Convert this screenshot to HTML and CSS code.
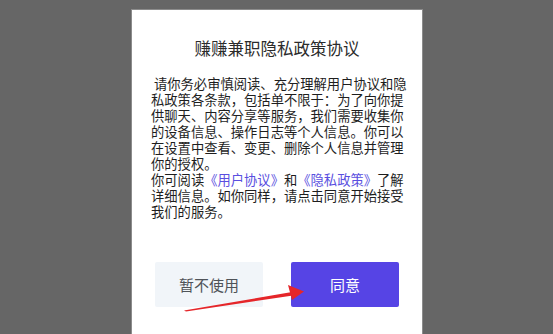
FILE: index.html
```html
<!DOCTYPE html>
<html lang="zh">
<head>
<meta charset="utf-8">
<link rel="stylesheet" href="styles.css">
</head>
<body>
<div class="page">
  <div class="dialog">
    <h1 class="title">赚赚兼职隐私政策协议</h1>
    <div class="content">
      <p>&nbsp;请你务必审慎阅读、充分理解用户协议和隐<br>私政策各条款，包括单不限于：为了向你提<br>供聊天、内容分享等服务，我们需要收集你<br>的设备信息、操作日志等个人信息。你可以<br>在设置中查看、变更、删除个人信息并管理<br>你的授权。</p>
      <p>你可阅读<a class="link">《用户协议》</a>和<a class="link">《隐私政策》</a>了解<br>详细信息。如你同样，请点击同意开始接受<br>我们的服务。</p>
    </div>
    <div class="actions">
      <button class="btn btn-cancel">暂不使用</button>
      <button class="btn btn-ok">同意</button>
    </div>
    <svg class="arrow" width="553" height="334" viewBox="0 0 553 334">
      <polygon points="184,310.5 292,292 293,295.5 186,311.5" fill="#e5262a"/>
      <polygon points="288,285 304,291.5 292,300" fill="#e5262a"/>
    </svg>
  </div>
</div>
</body>
</html>
```

FILE: styles.css
```css
html, body {
  margin: 0;
  padding: 0;
  width: 553px;
  height: 334px;
  overflow: hidden;
  background: #666666;
  font-family: "Noto Sans CJK SC", "Noto Sans", sans-serif;
}
.page {
  padding-top: 9px;
  padding-left: 131px;
}
.dialog {
  width: 290px;
  height: 330px;
  background: #ffffff;
  border: 1px solid #8c8c8c;
  border-bottom: none;
}
.title {
  margin: 0;
  padding-top: 27px;
  font-size: 16.5px;
  line-height: 22px;
  font-weight: 400;
  color: #2b2b2b;
  text-align: center;
}
.content {
  margin-top: 17px;
  padding: 0 19px;
  font-size: 13.3px;
  line-height: 16px;
  color: #1e1e1e;
  white-space: nowrap;
}
.content p {
  margin: 0;
}
.link {
  color: #5a4fe0;
}
.actions {
  display: flex;
  justify-content: space-between;
  padding: 0 23px;
  margin-top: 42px;
}
.btn {
  width: 108px;
  height: 45px;
  border: none;
  border-radius: 2px;
  font-family: "Noto Sans CJK SC", "Noto Sans", sans-serif;
  font-size: 15px;
  padding: 0;
}
.btn-cancel {
  background: #f1f5f9;
  color: #4f5358;
}
.btn-ok {
  background: #5644e5;
  color: #ffffff;
}
.arrow {
  position: absolute;
  left: 0;
  top: 0;
  pointer-events: none;
}
```
